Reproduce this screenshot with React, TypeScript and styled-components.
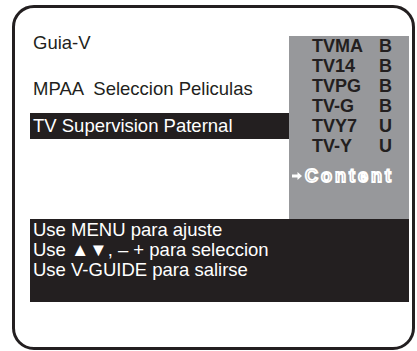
import React from 'react';
import styled, { createGlobalStyle } from 'styled-components';

const GlobalStyle = createGlobalStyle`
  html, body {
    margin: 0;
    padding: 0;
    background: #ffffff;
  }
  body {
    font-family: 'Liberation Sans', Arial, sans-serif;
    color: #231f20;
  }
`;

const Page = styled.div`
  width: 417px;
  height: 351px;
  box-sizing: border-box;
  padding: 5px 2px 1px 12px;
`;

const Frame = styled.div`
  box-sizing: border-box;
  width: 403px;
  height: 345px;
  border: 3px solid #231f20;
  border-radius: 22px;
  padding: 24px 3px 0 15px;
  display: flex;
  flex-direction: column;
`;

const TopArea = styled.div`
  display: flex;
  height: 187px;
`;

const MenuColumn = styled.div`
  flex: 1;
  display: flex;
  flex-direction: column;
`;

const MenuItem = styled.div<{ $active?: boolean; $gap?: number }>`
  font-size: 18.5px;
  line-height: 22px;
  padding: ${p => (p.$active ? '2px 0 2px 3px' : '0 0 0 3px')};
  margin-top: ${p => p.$gap ?? 0}px;
  background: ${p => (p.$active ? '#231f20' : 'transparent')};
  color: ${p => (p.$active ? '#ffffff' : '#231f20')};
  white-space: pre;
`;

const RatingPanel = styled.div`
  width: 120px;
  margin-top: 4px;
  background: #97989b;
  display: flex;
  flex-direction: column;
`;

const RatingRow = styled.div`
  display: flex;
  justify-content: space-between;
  padding: 0 17px 0 23px;
  font-size: 18px;
  font-weight: bold;
  line-height: 20px;
  color: #231f20;
`;

const ContentRow = styled.div`
  display: flex;
  align-items: center;
  gap: 3px;
  padding-left: 3px;
  margin-top: 10px;
`;

const OutlineText = styled.span`
  font-size: 18px;
  font-weight: bold;
  letter-spacing: 3px;
  line-height: 20px;
  color: #97989b;
  -webkit-text-stroke: 1.8px #ffffff;
`;

const HelpBar = styled.div`
  height: 83px;
  box-sizing: border-box;
  background: #231f20;
  color: #ffffff;
  padding: 1px 0 0 3px;
  font-size: 18.5px;
  line-height: 20px;
`;

const ratings = [
  { code: 'TVMA', mark: 'B' },
  { code: 'TV14', mark: 'B' },
  { code: 'TVPG', mark: 'B' },
  { code: 'TV-G', mark: 'B' },
  { code: 'TVY7', mark: 'U' },
  { code: 'TV-Y', mark: 'U' },
];

const Arrow = () => (
  <svg width="10" height="8" viewBox="0 0 10 8">
    <path d="M0 2.5 H5.5 V0 L10 4 L5.5 8 V5.5 H0 Z" fill="#ffffff" />
  </svg>
);

export default function App() {
  return (
    <Page>
      <GlobalStyle />
      <Frame>
        <TopArea>
          <MenuColumn>
            <MenuItem>Guia-V</MenuItem>
            <MenuItem $gap={24}>MPAA  Seleccion Peliculas</MenuItem>
            <MenuItem $gap={13} $active>TV Supervision Paternal</MenuItem>
          </MenuColumn>
          <RatingPanel>
            {ratings.map(r => (
              <RatingRow key={r.code}>
                <span>{r.code}</span>
                <span>{r.mark}</span>
              </RatingRow>
            ))}
            <ContentRow>
              <Arrow />
              <OutlineText>Content</OutlineText>
            </ContentRow>
          </RatingPanel>
        </TopArea>
        <HelpBar>
          <div>Use MENU para ajuste</div>
          <div>Use ▲▼, – + para seleccion</div>
          <div>Use V-GUIDE para salirse</div>
        </HelpBar>
      </Frame>
    </Page>
  );
}
